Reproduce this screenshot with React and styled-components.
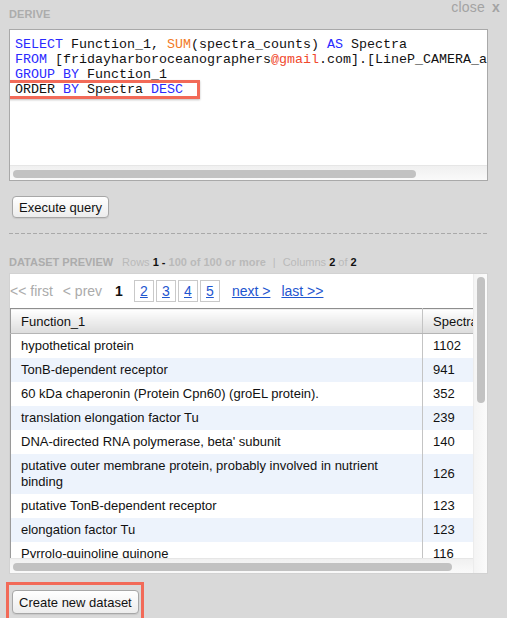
import styled, { createGlobalStyle } from 'styled-components';

const GlobalStyle = createGlobalStyle`
  html, body {
    margin: 0;
    padding: 0;
    background: #d9d9d9;
    overflow: hidden;
  }
  body {
    font-family: "Liberation Sans", Arial, sans-serif;
  }
`;

const Page = styled.div`
  position: relative;
  width: 507px;
  height: 618px;
  box-sizing: border-box;
  padding: 0 19px 0 9px;
  overflow: hidden;
`;

const CloseLink = styled.a`
  position: absolute;
  top: 0;
  right: 7px;
  font-size: 14px;
  line-height: 14px;
  color: #a3a3a3;
  text-decoration: none;
  letter-spacing: 0.2px;

  b {
    margin-left: 7px;
    font-weight: bold;
  }
`;

const SectionLabel = styled.div`
  height: 29px;
  box-sizing: border-box;
  padding-top: 8px;
  font-size: 11px;
  line-height: 12px;
  font-weight: bold;
  color: #acacac;
  letter-spacing: 0.1px;
`;

const Editor = styled.div`
  height: 152px;
  box-sizing: border-box;
  border: 1px solid #a9a9a9;
  background: #fff;
  display: flex;
  flex-direction: column;
`;

const CodeArea = styled.div`
  flex: 1;
  padding: 7px 0 0 5px;
  overflow: hidden;
  white-space: pre;
  font-family: "Liberation Mono", "Courier New", monospace;
  font-size: 13.33px;
  line-height: 15px;
  color: #111;
`;

const CodeLine = styled.div`
  height: 15px;
`;

const Kw = styled.span`
  color: ${p => p.tone === 'fn' ? '#f27a26' : p.tone === 'str' ? '#f0482c' : '#2a2aff'};
`;

const Highlight = styled.span`
  position: relative;
  display: inline-block;

  &::after {
    content: '';
    position: absolute;
    left: -9px;
    right: -17px;
    top: -2px;
    bottom: -2px;
    border: 3px solid #f26a58;
    box-shadow: 0 1px 2px rgba(0, 0, 0, 0.25);
  }
`;

const HScroll = styled.div`
  height: 15px;
  flex: none;
  box-sizing: border-box;
  padding-top: 4px;
  padding-left: 3px;
  background: linear-gradient(#f0f0f0, #fafafa);
  border-top: 1px solid #e6e6e6;
`;

const Thumb = styled.div`
  height: 8px;
  border-radius: 4px;
  background: #c2c2c2;
`;

const Button = styled.button`
  display: block;
  font-family: "Liberation Sans", Arial, sans-serif;
  font-size: 13px;
  color: #111;
  height: ${p => p.tall ? 24 : 22}px;
  padding: 0 6px;
  border: 1px solid #a7a7a7;
  border-radius: 4px;
  background: linear-gradient(#ffffff, #ececec);
  box-shadow: 0 1px 1px rgba(0, 0, 0, 0.08);
  cursor: pointer;
`;

const ExecuteRow = styled.div`
  margin: 15px 0 0 3px;
`;

const Divider = styled.div`
  margin-top: 15px;
  height: 1px;
  background: repeating-linear-gradient(to right, #a9a9a9 0 4px, transparent 4px 6px);
`;

const InfoLine = styled.div`
  margin: 22px 0 5px;
  height: 12px;
  font-size: 11px;
  line-height: 12px;
  color: #b9b9b9;
  white-space: nowrap;
`;

const InfoTitle = styled.span`
  font-weight: bold;
  color: #acacac;
  margin-right: 9px;
`;

const Strong = styled.b`
  color: ${p => p.dark ? '#111' : '#b9b9b9'};
`;

const Sep = styled.span`
  margin: 0 7px;
`;

const Panel = styled.div`
  height: 301px;
  box-sizing: border-box;
  border: 1px solid #d2d2d2;
  background: #fff;
  display: flex;
`;

const PanelBody = styled.div`
  flex: 1;
  min-width: 0;
  display: flex;
  flex-direction: column;
  overflow: hidden;
`;

const VScroll = styled.div`
  width: 14px;
  flex: none;
  padding: 3px 0 0 3px;
  box-sizing: border-box;
  background: linear-gradient(to right, #f4f4f4, #fbfbfb);
  border-left: 1px solid #ececec;
`;

const VThumb = styled.div`
  width: 8px;
  height: 126px;
  border-radius: 4px;
  background: #c2c2c2;
`;

const Pager = styled.div`
  display: flex;
  align-items: center;
  height: 22px;
  margin-top: 6px;
  font-size: 14px;
  white-space: nowrap;
`;

const PagerMuted = styled.span`
  color: #ababab;
  margin-right: ${p => p.gap || 0}px;
`;

const Current = styled.b`
  color: #111;
  margin: 0 11px 0 13px;
`;

const PageBox = styled.a`
  display: flex;
  align-items: center;
  justify-content: center;
  width: 20px;
  height: 22px;
  box-sizing: border-box;
  border: 1px solid #c9c9c9;
  margin-right: 2px;
  color: #1f56cf;
  text-decoration: underline;
`;

const PagerLink = styled.a`
  color: #1f56cf;
  text-decoration: underline;
  margin-left: ${p => p.gap || 0}px;
`;

const TableArea = styled.div`
  flex: 1;
  margin-top: 6px;
  overflow: hidden;
`;

const Table = styled.table`
  border-collapse: collapse;
  table-layout: fixed;
  width: 492px;
  border-left: 1px solid #9a9a9a;
  font-size: 13px;
  color: #111;
`;

const HeadCell = styled.th`
  height: 24px;
  padding: 0 0 0 10px;
  text-align: left;
  font-weight: normal;
  background: linear-gradient(#ffffff, #dcdcdc);
  border-top: 1px solid #8e8e8e;
  border-bottom: 1px solid #b5b5b5;
  border-right: 1px solid #c4c4c4;
`;

const Row = styled.tr`
  background: ${p => p.alt ? '#edf3fc' : '#ffffff'};
`;

const Cell = styled.td`
  height: ${p => p.tall ? 40 : 24}px;
  padding: 0 0 0 10px;
  line-height: 16px;
  border-right: 1px solid #c4c4c4;
  vertical-align: middle;
  box-sizing: border-box;
`;

const CreateMark = styled.div`
  display: inline-block;
  margin: 8px 0 0 -3px;
  padding: 5px 2px 6px 3px;
  border: 3px solid #f26a58;
`;

const rows = [
  ['hypothetical protein', 1102],
  ['TonB-dependent receptor', 941],
  ['60 kDa chaperonin (Protein Cpn60) (groEL protein).', 352],
  ['translation elongation factor Tu', 239],
  ["DNA-directed RNA polymerase, beta' subunit", 140],
  ['putative outer membrane protein, probably involved in nutrient binding', 126],
  ['putative TonB-dependent receptor', 123],
  ['elongation factor Tu', 123],
  ['Pyrrolo-quinoline quinone', 116],
  ['ribosomal protein L7/L12', 112],
];

function App() {
  return (
    <Page>
      <GlobalStyle />
      <CloseLink href="#">close<b>x</b></CloseLink>
      <SectionLabel>DERIVE</SectionLabel>

      <Editor>
        <CodeArea>
          <CodeLine><Kw>SELECT</Kw> Function_1, <Kw tone="fn">SUM</Kw>(spectra_counts) <Kw>AS</Kw> Spectra</CodeLine>
          <CodeLine><Kw>FROM</Kw> [fridayharboroceanographers<Kw tone="str">@gmail</Kw>.com].[LineP_CAMERA_all_proteins_spectra]</CodeLine>
          <CodeLine><Kw>GROUP</Kw> <Kw>BY</Kw> Function_1</CodeLine>
          <CodeLine><Highlight>ORDER <Kw>BY</Kw> Spectra <Kw>DESC</Kw></Highlight></CodeLine>
        </CodeArea>
        <HScroll>
          <Thumb style={{ width: 403 }} />
        </HScroll>
      </Editor>

      <ExecuteRow>
        <Button>Execute query</Button>
      </ExecuteRow>

      <Divider />

      <InfoLine>
        <InfoTitle>DATASET PREVIEW</InfoTitle>
        Rows <Strong dark>1 -</Strong> <Strong>100 of 100 or more</Strong>
        <Sep>|</Sep>
        Columns <Strong dark>2</Strong> of <Strong dark>2</Strong>
      </InfoLine>

      <Panel>
        <PanelBody>
          <Pager>
            <PagerMuted gap={10}>&lt;&lt; first</PagerMuted>
            <PagerMuted>&lt; prev</PagerMuted>
            <Current>1</Current>
            <PageBox href="#">2</PageBox>
            <PageBox href="#">3</PageBox>
            <PageBox href="#">4</PageBox>
            <PageBox href="#">5</PageBox>
            <PagerLink href="#" gap={10}>next &gt;</PagerLink>
            <PagerLink href="#" gap={11}>last &gt;&gt;</PagerLink>
          </Pager>
          <TableArea>
            <Table>
              <colgroup>
                <col style={{ width: 412 }} />
                <col style={{ width: 80 }} />
              </colgroup>
              <thead>
                <tr>
                  <HeadCell>Function_1</HeadCell>
                  <HeadCell>Spectra</HeadCell>
                </tr>
              </thead>
              <tbody>
                {rows.map(([name, count], i) => (
                  <Row key={i} alt={i % 2 === 1}>
                    <Cell tall={name.length > 60}>{name}</Cell>
                    <Cell>{count}</Cell>
                  </Row>
                ))}
              </tbody>
            </Table>
          </TableArea>
          <HScroll>
            <Thumb style={{ width: 439 }} />
          </HScroll>
        </PanelBody>
        <VScroll>
          <VThumb />
        </VScroll>
      </Panel>

      <CreateMark>
        <Button tall>Create new dataset</Button>
      </CreateMark>
    </Page>
  );
}

export default App;
